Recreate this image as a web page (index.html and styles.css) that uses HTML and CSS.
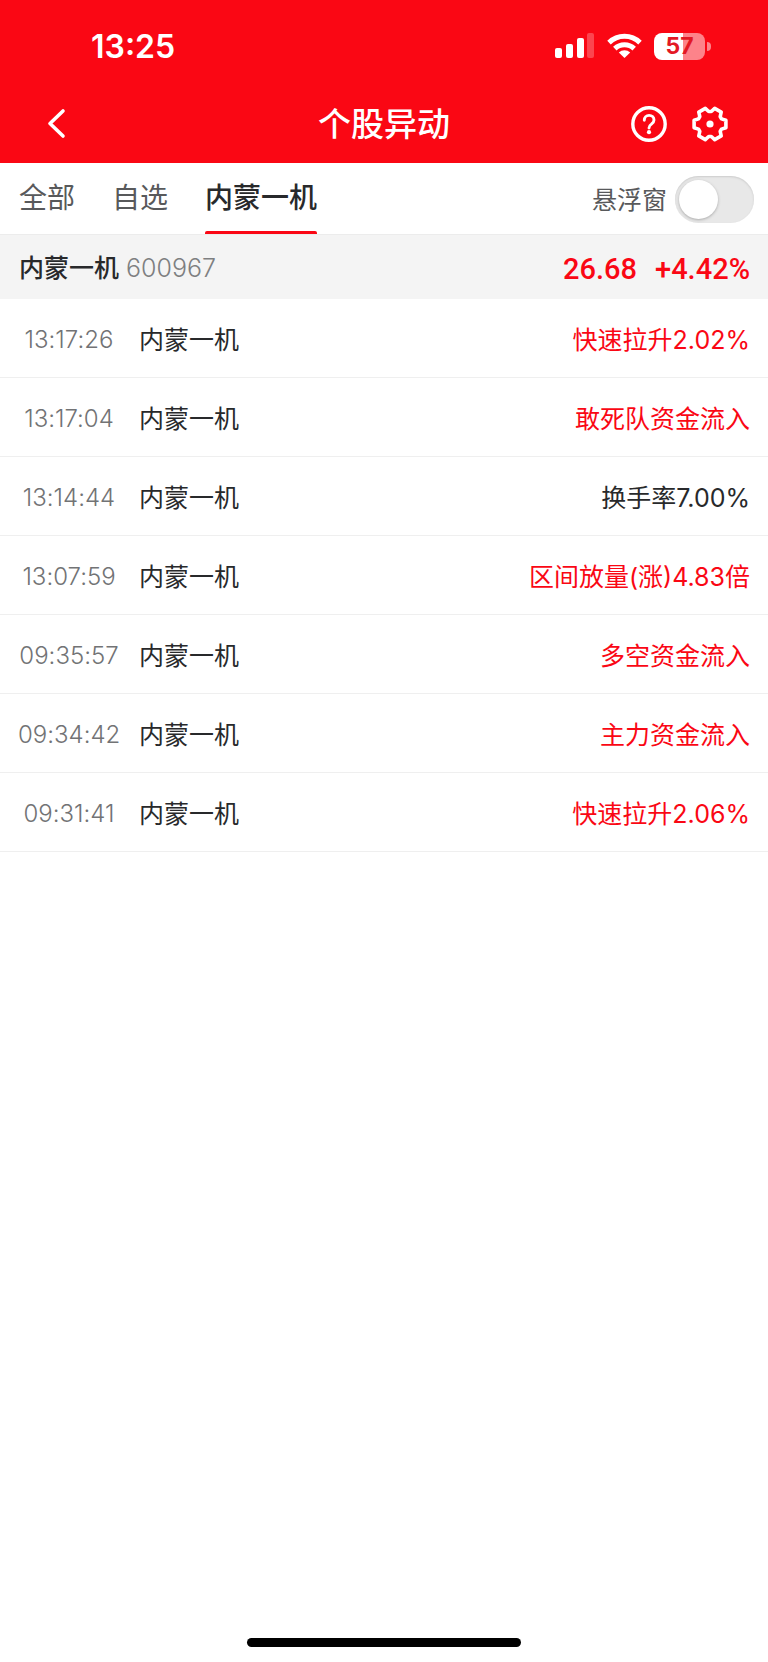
FILE: index.html
```html
<!DOCTYPE html>
<html lang="zh-CN">
<head>
<meta charset="utf-8">
<meta name="viewport" content="width=device-width, initial-scale=1">
<title>个股异动</title>
<link rel="stylesheet" href="styles.css">
</head>
<body>
<header class="header">
  <div class="status">
    <time class="clock">13:25</time>
    <div class="status-icons">
      <svg class="signal" width="40" height="26" viewBox="0 0 40 26" fill="#fff" aria-hidden="true">
        <rect x="0" y="15" width="7" height="10" rx="2"/>
        <rect x="11" y="11" width="7" height="14" rx="2"/>
        <rect x="22" y="5" width="7" height="20" rx="2"/>
        <rect x="32" y="0" width="7" height="25" rx="2" opacity=".25"/>
      </svg>
      <svg class="wifi" width="35" height="26" viewBox="0 0 35 26" aria-hidden="true">
        <g fill="none" stroke="#fff" stroke-width="5">
          <path d="M2 9.6a22.3 22.3 0 0 1 31 0"/>
          <path d="M7.8 15.6a14 14 0 0 1 19.4 0"/>
        </g>
        <path d="M11.8 19.6a8.2 8.2 0 0 1 11.4 0L17.5 25z" fill="#fff"/>
      </svg>
      <div class="battery"><span class="battery-level">57</span><span class="battery-cap"></span></div>
    </div>
  </div>
  <div class="navbar">
    <button class="icon-button back" type="button" aria-label="返回">
      <svg width="20" height="32" viewBox="0 0 20 32" fill="none" stroke="#fff" stroke-width="3.6" stroke-linecap="round" stroke-linejoin="round"><path d="M16 3 3 15.5 16 28"/></svg>
    </button>
    <h1 class="title">个股异动</h1>
    <div class="actions">
      <button class="icon-button" type="button" aria-label="帮助">
        <svg width="36" height="36" viewBox="0 0 36 36" fill="none" stroke="#fff" stroke-linecap="round" stroke-linejoin="round">
          <circle cx="18" cy="18" r="16.2" stroke-width="3.4"/>
          <path d="M13.3 14.2c0-3 2-4.8 4.8-4.8s4.9 1.8 4.9 4.5c0 2.2-1.3 3.2-2.6 4.2-1.4 1-2.4 1.8-2.4 3.9" stroke-width="2.9"/>
          <circle cx="18" cy="26.2" r="2.1" fill="#fff" stroke="none"/>
        </svg>
      </button>
      <button class="icon-button" type="button" aria-label="设置">
        <svg width="36" height="36" viewBox="-18 -18 36 36" fill="none" stroke="#fff" stroke-width="3.6" stroke-linejoin="round">
          <path d="M11.5-5.1 15.9-3.7V3.7L11.5 5.1 10.2 7.4 11.2 11.9 4.7 15.6 1.3 12.5H-1.3L-4.7 15.6-11.2 11.9-10.2 7.4-11.5 5.1-15.9 3.7V-3.7L-11.5-5.1-10.2-7.4-11.2-11.9-4.7-15.6-1.3-12.5H1.3L4.7-15.6 11.2-11.9 10.2-7.4z"/>
          <circle r="3.6" fill="#fff" stroke="none"/>
        </svg>
      </button>
    </div>
  </div>
</header>
<nav class="tabs">
  <a class="tab" href="#all">全部</a>
  <a class="tab" href="#watchlist">自选</a>
  <a class="tab tab-active" href="#stock" aria-current="page">内蒙一机</a>
  <label class="float-toggle">悬浮窗<input class="switch" type="checkbox" role="switch"></label>
</nav>
<main>
  <section class="quote">
    <h2 class="quote-name">内蒙一机</h2>
    <span class="quote-code">600967</span>
    <span class="quote-price">26.68</span>
    <span class="quote-change">+4.42%</span>
  </section>
  <ul class="events">
    <li class="event"><time class="event-time">13:17:26</time><span>内蒙一机</span><span class="event-text up">快速拉升2.02%</span></li>
    <li class="event"><time class="event-time">13:17:04</time><span>内蒙一机</span><span class="event-text up">敢死队资金流入</span></li>
    <li class="event"><time class="event-time">13:14:44</time><span>内蒙一机</span><span class="event-text">换手率7.00%</span></li>
    <li class="event"><time class="event-time">13:07:59</time><span>内蒙一机</span><span class="event-text up">区间放量(涨)4.83倍</span></li>
    <li class="event"><time class="event-time">09:35:57</time><span>内蒙一机</span><span class="event-text up">多空资金流入</span></li>
    <li class="event"><time class="event-time">09:34:42</time><span>内蒙一机</span><span class="event-text up">主力资金流入</span></li>
    <li class="event"><time class="event-time">09:31:41</time><span>内蒙一机</span><span class="event-text up">快速拉升2.06%</span></li>
  </ul>
</main>
<div class="home-indicator"></div>
</body>
</html>
```

FILE: styles.css
```css
* { box-sizing: border-box; }

body {
  margin: 0;
  min-height: 100vh;
  display: flex;
  flex-direction: column;
  background: #fff;
  color: #28292b;
  font: 400 25px/36px Inter, "Noto Sans CJK SC", sans-serif;
}

.header { background: #fa0714; color: #fff; }

.status {
  height: 84px;
  padding: 8px 57px 0 91px;
  display: flex;
  align-items: center;
  justify-content: space-between;
}
.clock { padding-top: 2px; font-size: 32px; font-weight: 600; }
.status-icons { display: flex; align-items: center; gap: 12px; }
.battery {
  position: relative;
  width: 51px;
  height: 27px;
  margin-right: 6px;
  border-radius: 8px;
  background: linear-gradient(to right, #fff 57%, #fd838a 57%);
  text-align: center;
}
.battery-level { display: block; color: #e31824; font-size: 23px; font-weight: 700; line-height: 27px; }
.battery-cap {
  position: absolute;
  left: 53px;
  top: 9px;
  width: 4px;
  height: 9px;
  border-radius: 0 4px 4px 0;
  background: #fd838a;
}

.navbar {
  height: 79px;
  padding: 0 40px;
  display: grid;
  grid-template-columns: 1fr auto 1fr;
  align-items: center;
}
.title { margin: 0; font-size: 33px; font-weight: 500; line-height: 48px; }
.icon-button { padding: 0; border: 0; background: none; display: flex; cursor: pointer; }
.back { padding-left: 7px; }
.actions { display: flex; justify-content: flex-end; gap: 25px; }

.tabs {
  height: 72px;
  padding: 0 14px 0 19px;
  display: flex;
  gap: 37px;
  border-bottom: 1px solid #ececec;
}
.tab {
  position: relative;
  font-size: 28px;
  line-height: 70px;
  color: #58595b;
  text-decoration: none;
}
.tab-active { color: #28292b; font-weight: 500; }
.tab-active::after {
  content: "";
  position: absolute;
  inset: auto 0 0;
  height: 3px;
  border-radius: 2px 2px 0 0;
  background: #fa0714;
}
.float-toggle {
  margin-left: auto;
  padding-top: 2px;
  display: flex;
  align-items: center;
  gap: 8px;
  color: #58595b;
}
.switch {
  appearance: none;
  width: 79px;
  height: 47px;
  margin: 0;
  padding: 4px;
  border-radius: 24px;
  background: #e8e8e8;
  box-shadow: inset 0 1px 2px #ccc;
}
.switch::before {
  content: "";
  display: block;
  width: 39px;
  height: 39px;
  border-radius: 50%;
  background: #fff;
  box-shadow: 0 1px 3px #aaa;
}
.switch:checked { background: #fa0714; }
.switch:checked::before { margin-left: auto; }

.quote {
  height: 64px;
  padding: 2px 18px 0 19px;
  display: flex;
  align-items: center;
  background: #f4f4f4;
}
.quote-name { margin: 0 7px 0 0; font-size: 25px; font-weight: 500; line-height: 36px; }
.quote-code { color: #7e7f81; font-weight: 300; }
.quote-price, .quote-change {
  padding-top: 2px;
  color: #fa0714;
  font-family: Roboto, sans-serif;
  font-size: 29px;
  font-weight: 500;
}
.quote-price { margin-left: auto; }
.quote-change { margin-left: 18px; }

.events { margin: 0; padding: 0; list-style: none; }
.event {
  height: 79px;
  padding: 3px 18px 0;
  display: grid;
  grid-template-columns: 102px auto 1fr;
  column-gap: 19px;
  align-items: center;
  border-bottom: 1px solid #efefef;
}
.event-time {
  color: #727375;
  font-size: 24px;
  font-weight: 300;
  font-feature-settings: "calt" 0;
  text-align: center;
}
.event-text { text-align: right; }
.up { color: #fa0714; }

.home-indicator {
  width: 274px;
  height: 9px;
  margin: auto auto 15px;
  border-radius: 5px;
  background: #000;
}
```
